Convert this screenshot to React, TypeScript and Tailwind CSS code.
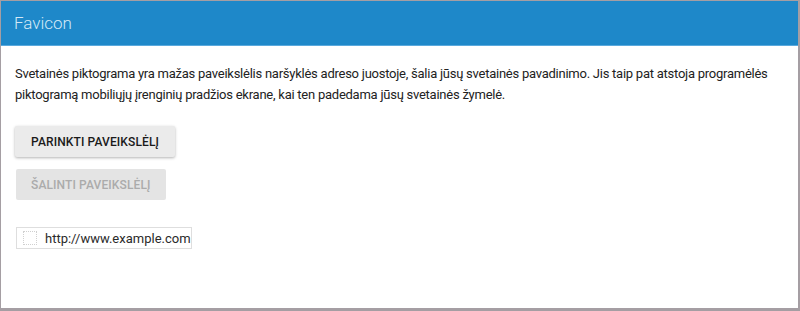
export default function App() {
  return (
    <div
      className="w-[800px] h-[311px] bg-white border-t border-l border-r-2 border-b-[3px] border-[#a59ea3] flex flex-col"
      style={{ fontFamily: 'Roboto, "Noto Sans", sans-serif' }}
    >
      <div className="h-[45px] bg-[#1e88c9] flex items-center px-[13px] border-b border-[#5aa9dd]">
        <h1 className="text-[17px] font-light text-[#d3e8f6] leading-none">Favicon</h1>
      </div>

      <div className="pl-[14px] pr-[6px] pt-[17px] flex flex-col items-start">
        <p className="text-[13px] leading-[21px] text-[#222] tracking-[-0.019em]">
          Svetainės piktograma yra mažas paveikslėlis naršyklės adreso juostoje, šalia jūsų svetainės pavadinimo. Jis taip pat atstoja programėlės piktogramą mobiliųjų įrenginių pradžios ekrane, kai ten padedama jūsų svetainės žymelė.
        </p>

        <button className="mt-[21px] h-[31px] px-[16px] bg-[#ebebeb] rounded-[2px] shadow-[0_1px_3px_rgba(0,0,0,0.3)] text-[12px] font-medium text-[#1a1a1a] tracking-[0.01em]">
          PARINKTI PAVEIKSLĖLĮ
        </button>

        <button
          disabled
          className="mt-[12px] ml-px h-[31px] px-[15px] bg-[#e4e4e4] rounded-[2px] text-[12px] font-medium text-[#ababab] tracking-[0.01em]"
        >
          ŠALINTI PAVEIKSLĖLĮ
        </button>

        <div className="mt-[27px] ml-px w-[176px] h-[22px] border border-[#dedede] flex items-center pl-[6px] gap-[8px]">
          <div className="w-[14px] h-[14px] border border-dotted border-[#d0d0d0]" />
          <span className="text-[13px] text-[#2a2a2a] leading-none">http://www.example.com</span>
        </div>
      </div>
    </div>
  );
}
